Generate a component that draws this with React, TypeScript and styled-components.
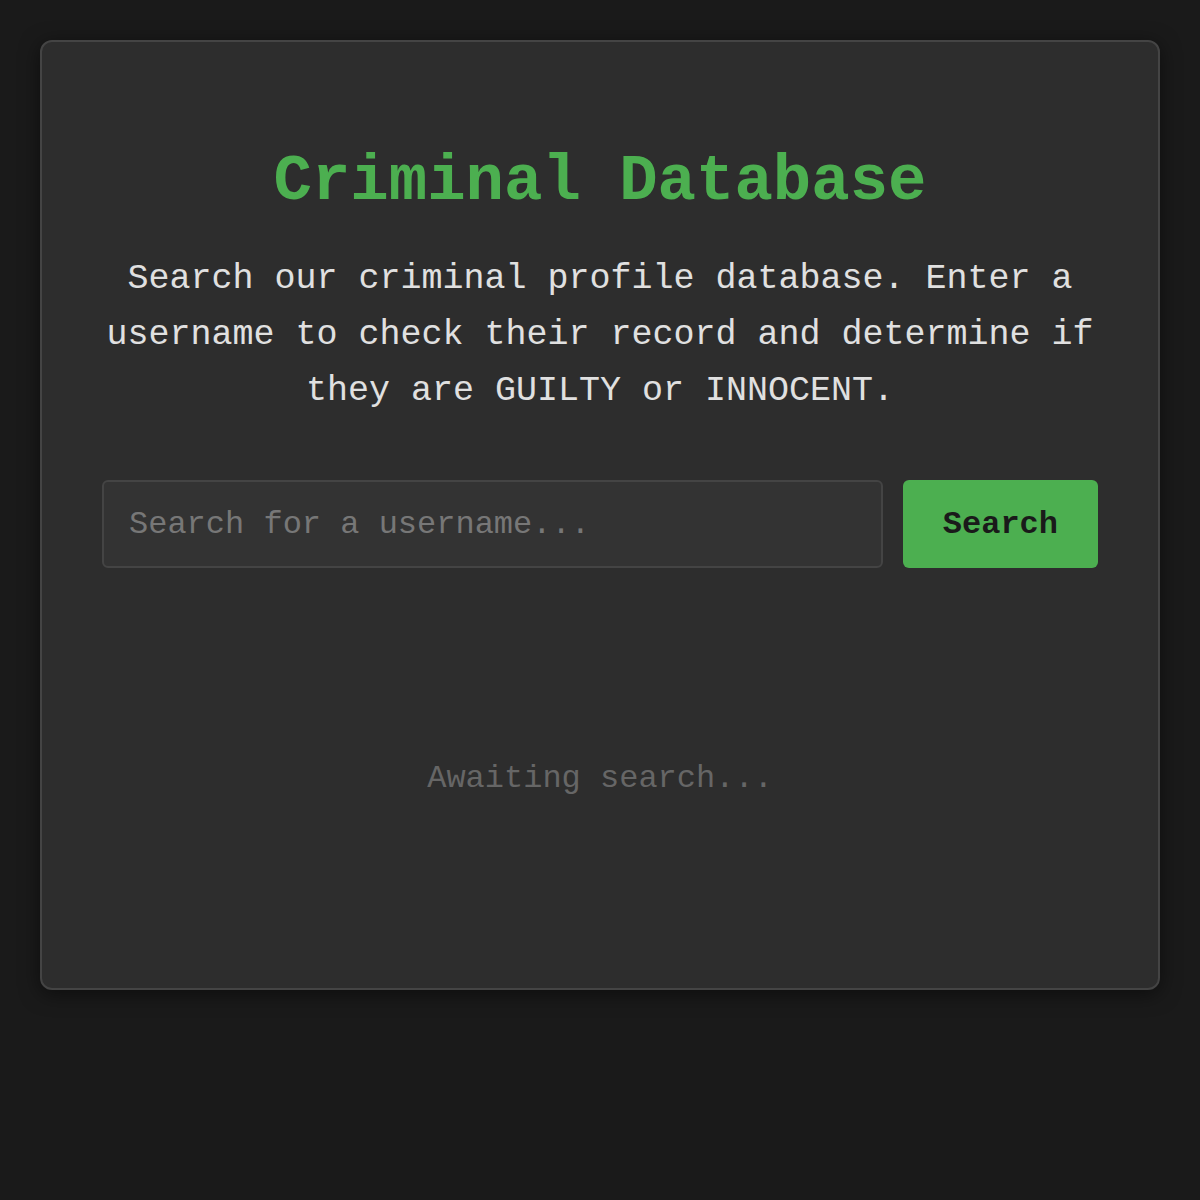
import React, { useState } from "react"
import styled, { createGlobalStyle } from "styled-components"

const GlobalStyle = createGlobalStyle`
	body {
		margin: 0;
		background: #1a1a1a;
		font-family: "Liberation Mono", "Courier New", monospace;
	}
`

const Page = styled.div`
	padding: 40px;
	min-height: 1200px;
	box-sizing: border-box;
`

const Card = styled.div`
	background: #2d2d2d;
	border: 2px solid #444;
	border-radius: 12px;
	padding: 60px;
	box-shadow: 0 4px 20px rgba(0, 0, 0, 0.5);
	display: flex;
	flex-direction: column;
`

const Title = styled.h1`
	color: #4caf50;
	font-size: 64px;
	font-weight: bold;
	text-align: center;
	margin: 44px 0 0 0;
	line-height: 72px;
`

const Intro = styled.p`
	color: #e0e0e0;
	font-size: 35px;
	line-height: 56px;
	text-align: center;
	margin: 33px 0 0 0;
`

const SearchRow = styled.form`
	display: flex;
	gap: 20px;
	margin-top: 61px;
`

const SearchInput = styled.input`
	flex: 1;
	height: 88px;
	box-sizing: border-box;
	background: #333;
	border: 2px solid #444;
	border-radius: 6px;
	padding: 0 25px;
	color: #e0e0e0;
	font-family: inherit;
	font-size: 32px;
	outline: none;
	&::placeholder {
		color: #777;
	}
`

const SearchButton = styled.button`
	height: 88px;
	padding: 0 40px;
	background: #4caf50;
	border: none;
	border-radius: 6px;
	color: #1a1a1a;
	font-family: inherit;
	font-size: 32px;
	font-weight: bold;
	cursor: pointer;
`

const Result = styled.div`
	margin-top: 60px;
	min-height: 300px;
	display: flex;
	align-items: center;
	justify-content: center;
	color: #666;
	font-size: 32px;
`

const App = () => {
	const [query, setQuery] = useState("")

	return (
		<Page>
			<GlobalStyle />
			<Card>
				<Title>Criminal Database</Title>
				<Intro>
					Search our criminal profile database. Enter a username to check their record and determine if they are
					GUILTY or INNOCENT.
				</Intro>
				<SearchRow onSubmit={(e) => e.preventDefault()}>
					<SearchInput
						placeholder="Search for a username..."
						value={query}
						onChange={(e) => setQuery(e.target.value)}
					/>
					<SearchButton type="submit">Search</SearchButton>
				</SearchRow>
				<Result>Awaiting search...</Result>
			</Card>
		</Page>
	)
}

export default App
